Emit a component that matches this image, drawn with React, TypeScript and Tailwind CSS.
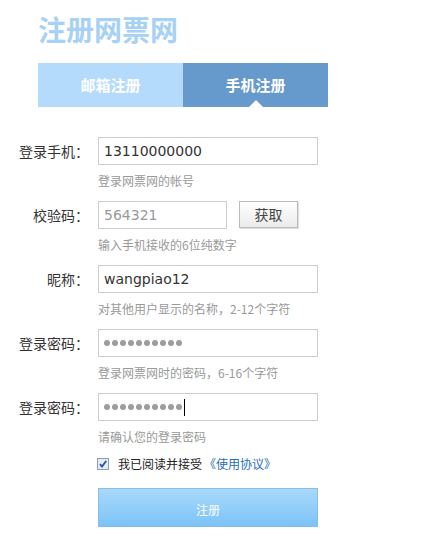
import React from 'react';

const cjk = { fontFamily: '"Noto Sans CJK SC", "Noto Sans", sans-serif' };

function Row({ label, hint, children }: { label: string; hint: string; children: React.ReactNode }) {
  return (
    <div className="flex">
      <div className="w-[89px] h-[28px] leading-[28px] text-right text-[14px] text-[#333]">{label}</div>
      <div className="ml-[9px] flex flex-col">
        {children}
        <div className="h-[36px] pt-[9px] text-[12px] leading-[14px] text-[#999]">{hint}</div>
      </div>
    </div>
  );
}

function Box({ children, w = 'w-[220px]' }: { children: React.ReactNode; w?: string }) {
  return (
    <div className={`${w} h-[28px] border border-[#cccccc] bg-white pl-[5px] flex items-center text-[14px] text-[#333]`}
      style={{ fontFamily: '"DejaVu Sans", Verdana, sans-serif' }}>
      {children}
    </div>
  );
}

// password mask, 10 grey dots
function Dots() {
  return (
    <div className="flex gap-[2px]">
      {Array.from({ length: 10 }).map((_, i) => (
        <span key={i} className="w-[6px] h-[6px] rounded-full bg-[#9d9d9d]" />
      ))}
    </div>
  );
}

export default function App() {
  return (
    <div className="w-[441px] h-[537px] bg-white overflow-hidden" style={cjk}>
      <div className="pl-[38px] pt-[14px]">
        <h1 className="text-[28px] leading-[30px] font-bold text-[#a8d1f6]">注册网票网</h1>
        <div className="mt-[19px] flex w-[290px] h-[44px]">
          <div className="flex-1 bg-[#b4dafc] flex items-center justify-center text-white text-[15px] font-bold">邮箱注册</div>
          <div className="relative flex-1 bg-[#6699cc] flex items-center justify-center text-white text-[15px] font-bold">
            手机注册
            <div className="absolute bottom-0 left-1/2 -translate-x-1/2 w-0 h-0 border-l-[7px] border-r-[7px] border-b-[7px] border-l-transparent border-r-transparent border-b-white" />
          </div>
        </div>
      </div>

      <div className="mt-[30px]">
        <Row label="登录手机：" hint="登录网票网的帐号">
          <Box>13110000000</Box>
        </Row>
        <Row label="校验码：" hint="输入手机接收的6位纯数字">
          <div className="flex">
            <Box w="w-[129px]"><span className="text-[#999]">564321</span></Box>
            <button className="ml-[12px] w-[59px] h-[27px] border border-[#bbbbbb] bg-gradient-to-b from-white to-[#ebebeb] shadow-[1px_1px_1px_rgba(0,0,0,0.12)] text-[14px] text-[#444]">获取</button>
          </div>
        </Row>
        <Row label="昵称：" hint="对其他用户显示的名称，2-12个字符">
          <Box>wangpiao12</Box>
        </Row>
        <Row label="登录密码：" hint="登录网票网时的密码，6-16个字符">
          <Box><Dots /></Box>
        </Row>
        <Row label="登录密码：" hint="请确认您的登录密码">
          <Box>
            <Dots />
            <span className="ml-[2px] w-px h-[17px] bg-black" />
          </Box>
        </Row>

        <div className="ml-[97px] flex items-center h-[16px] -mt-[1px]">
          <svg width="12" height="12" viewBox="0 0 12 12">
            <rect x="0.5" y="0.5" width="11" height="11" fill="#e6ebf0" stroke="#8aa0b8" />
            <path d="M3 6.2 L5 8.6 L9.2 3" fill="none" stroke="#2a4fa8" strokeWidth="1.8" />
          </svg>
          <span className="ml-[9px] text-[12px] text-[#222]">我已阅读并接受</span>
          <span className="ml-[2px] text-[12px] text-[#1e6fb5]">《使用协议》</span>
        </div>

        <button className="ml-[98px] mt-[16px] w-[220px] h-[39px] border border-[#89bde6] bg-gradient-to-b from-[#a8d9fb] to-[#7cc3f8] text-white text-[12px] pt-[4px]">注册</button>
      </div>
    </div>
  );
}
